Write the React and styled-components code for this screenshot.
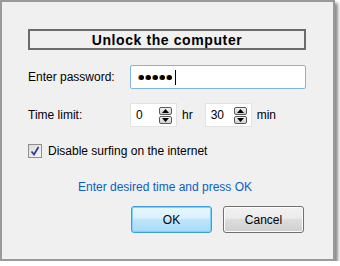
import React from 'react';
import styled, { createGlobalStyle } from 'styled-components';

const Global = createGlobalStyle`
  html, body { margin: 0; padding: 0; background: #ffffff; }
  body { font-family: "Liberation Sans", Arial, sans-serif; font-size: 12px; color: #000; }
`;

const Dialog = styled.div`
  box-sizing: border-box;
  width: 335px;
  height: 261px;
  background: #f0f0f0;
  border: 2px solid #9a9a9a;
  box-shadow: 3px 3px 3px rgba(0, 0, 0, 0.45);
  padding: 27px 27px 0 26px;
  display: flex;
  flex-direction: column;
`;

const Title = styled.div`
  box-sizing: border-box;
  height: 21px;
  border: 2px solid #6b6b6b;
  display: flex;
  align-items: center;
  justify-content: center;
  font-weight: bold;
  font-size: 14px;
  letter-spacing: 0.6px;
`;

const Row = styled.div`
  display: flex;
  align-items: center;
  margin-top: ${p => p.$mt}px;
  height: ${p => p.$h || 24}px;
`;

const Label = styled.div`
  width: 102px;
  flex: none;
`;

const Field = styled.div`
  box-sizing: border-box;
  height: 24px;
  flex: 1;
  background: #fff;
  border: 1px solid #7eb4ea;
  border-radius: 2px;
  display: flex;
  align-items: center;
  padding-left: 8px;
`;

const Dot = styled.span`
  width: 5px;
  height: 5px;
  border-radius: 50%;
  background: #000;
  margin-right: 2px;
  box-shadow: -1px 0 0 #c98a1a;
`;

const Caret = styled.span`
  width: 1px;
  height: 15px;
  background: #000;
  margin-left: 1px;
`;

const Spin = styled.div`
  box-sizing: border-box;
  width: 47px;
  height: 24px;
  background: #fff;
  border: 1px solid #e3e3e3;
  display: flex;
  align-items: center;
  justify-content: space-between;
  padding: 0 4px 0 5px;
`;

const Arrows = styled.div`
  display: flex;
  flex-direction: column;
  gap: 1px;
`;

const ArrowBtn = styled.div`
  width: 13px;
  height: 8px;
  box-sizing: border-box;
  border: 1px solid #5a5a5a;
  border-radius: 2px;
  background: linear-gradient(#f4f4f4, #cfcfcf);
  display: flex;
  align-items: center;
  justify-content: center;
`;

const Unit = styled.span`
  margin: 0 ${p => p.$mr}px 0 5px;
`;

const Check = styled.div`
  box-sizing: border-box;
  width: 14px;
  height: 14px;
  border: 1px solid #8f8f8f;
  background: linear-gradient(135deg, #dcdcdc, #f7f7f7);
  margin-right: 6px;
  display: flex;
  align-items: center;
  justify-content: center;
`;

const Hint = styled.div`
  margin-top: 13px;
  text-align: center;
  color: #0a5fc4;
  padding-right: 4px;
`;

const Buttons = styled.div`
  display: flex;
  justify-content: flex-end;
  gap: 11px;
  margin: 12px 2px 0 0;
`;

const Button = styled.div`
  box-sizing: border-box;
  width: 81px;
  height: 27px;
  border-radius: 3px;
  display: flex;
  align-items: center;
  justify-content: center;
  border: 1px solid ${p => (p.$primary ? '#3c9fdc' : '#707070')};
  background: ${p =>
    p.$primary
      ? 'linear-gradient(#eaf6fd 0%, #d9f0fc 45%, #bee6fd 50%, #a7d9f5 100%)'
      : 'linear-gradient(#f2f2f2 0%, #ebebeb 45%, #dddddd 50%, #cfcfcf 100%)'};
  box-shadow: inset 0 0 0 1px ${p => (p.$primary ? '#7fd1f8' : '#fcfcfc')};
`;

const Up = () => (
  <svg width="7" height="4" viewBox="0 0 7 4"><path d="M0 4 L3.5 0 L7 4 Z" fill="#000" /></svg>
);
const Down = () => (
  <svg width="7" height="4" viewBox="0 0 7 4"><path d="M0 0 L3.5 4 L7 0 Z" fill="#000" /></svg>
);

const Spinner = ({ value }) => (
  <Spin>
    <span>{value}</span>
    <Arrows>
      <ArrowBtn><Up /></ArrowBtn>
      <ArrowBtn><Down /></ArrowBtn>
    </Arrows>
  </Spin>
);

export default function App() {
  return (
    <>
      <Global />
      <Dialog>
        <Title>Unlock the computer</Title>
        <Row $mt={15}>
          <Label>Enter password:</Label>
          <Field>
            {[0, 1, 2, 3, 4].map(i => <Dot key={i} />)}
            <Caret />
          </Field>
        </Row>
        <Row $mt={14}>
          <Label>Time limit:</Label>
          <Spinner value="0" />
          <Unit $mr={12}>hr</Unit>
          <Spinner value="30" />
          <Unit $mr={0}>min</Unit>
        </Row>
        <Row $mt={8} $h={32}>
          <Check>
            <svg width="10" height="10" viewBox="0 0 10 10">
              <path d="M1.5 5.5 L4 8.5 L8.5 1" stroke="#2c3f9c" strokeWidth="1.8" fill="none" />
            </svg>
          </Check>
          <span>Disable surfing on the internet</span>
        </Row>
        <Hint>Enter desired time and press OK</Hint>
        <Buttons>
          <Button $primary>OK</Button>
          <Button>Cancel</Button>
        </Buttons>
      </Dialog>
    </>
  );
}
